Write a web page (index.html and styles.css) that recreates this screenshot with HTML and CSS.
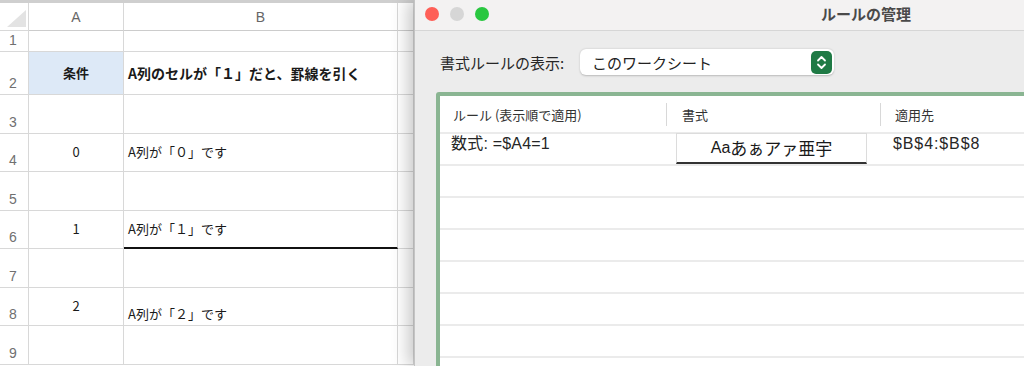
FILE: index.html
```html
<!DOCTYPE html>
<html lang="ja">
<head>
<meta charset="utf-8">
<title>ルールの管理</title>
<link rel="stylesheet" href="styles.css">
</head>
<body>
<div class="sheet">
  <div class="grid">
    <div class="corner"><svg width="28" height="27" viewBox="0 0 28 27"><polygon points="7,24 26,24 26,7" fill="#e3e3e3"/></svg></div>
    <div class="colhead">A</div>
    <div class="colhead">B</div>
    <div class="colhead"></div>

    <div class="rowhead">1</div><div class="cell"></div><div class="cell"></div><div class="cell"></div>
    <div class="rowhead">2</div><div class="cell center bold blue">条件</div><div class="cell bold big">A列のセルが「１」だと、罫線を引く</div><div class="cell"></div>
    <div class="rowhead">3</div><div class="cell"></div><div class="cell"></div><div class="cell"></div>
    <div class="rowhead">4</div><div class="cell center">0</div><div class="cell">A列が「０」です</div><div class="cell"></div>
    <div class="rowhead">5</div><div class="cell"></div><div class="cell"></div><div class="cell"></div>
    <div class="rowhead">6</div><div class="cell center">1</div><div class="cell ruled">A列が「１」です</div><div class="cell"></div>
    <div class="rowhead">7</div><div class="cell"></div><div class="cell"></div><div class="cell"></div>
    <div class="rowhead">8</div><div class="cell center">2</div><div class="cell bottom">A列が「２」です</div><div class="cell"></div>
    <div class="rowhead">9</div><div class="cell"></div><div class="cell"></div><div class="cell"></div>
  </div>
</div>

<div class="dialog">
  <div class="titlebar">
    <span class="light red"></span>
    <span class="light grey"></span>
    <span class="light green"></span>
    <span class="title">ルールの管理</span>
  </div>
  <div class="dbody">
    <div class="filter">
      <span class="label">書式ルールの表示:</span>
      <div class="select">
        <span class="seltext">このワークシート</span>
        <span class="stepper"><svg width="21" height="23" viewBox="0 0 21 23"><path d="M7 9.5 L10.5 6 L14 9.5 M7 13.5 L10.5 17 L14 13.5" fill="none" stroke="#fff" stroke-width="1.8" stroke-linecap="round" stroke-linejoin="round"/></svg></span>
      </div>
    </div>
    <div class="table">
      <div class="thead">
        <div class="th c1">ルール (表示順で適用)</div>
        <div class="sep"></div>
        <div class="th c2">書式</div>
        <div class="sep"></div>
        <div class="th c3">適用先</div>
      </div>
      <div class="tr">
        <div class="td c1">数式: =$A4=1</div>
        <div class="td c2"><div class="preview"><span class="lat">Aa</span>あぁアァ亜宇</div></div>
        <div class="td c3">$B$4:$B$8</div>
      </div>
      <div class="tr"></div>
      <div class="tr"></div>
      <div class="tr"></div>
      <div class="tr"></div>
      <div class="tr"></div>
      <div class="tr"></div>
      <div class="tr"></div>
    </div>
  </div>
</div>
</body>
</html>
```

FILE: styles.css
```css
body {
  margin: 0;
  width: 1024px;
  height: 366px;
  overflow: hidden;
  display: flex;
  background: #fff;
  font-family: "Noto Sans CJK JP", sans-serif;
  color: #1a1a1a;
}

/* ---------- spreadsheet ---------- */
.sheet {
  width: 414px;
  flex: none;
  border-top: 3px solid #cfcfcf;
  box-sizing: border-box;
  background: #fff;
}
.grid {
  display: grid;
  grid-template-columns: 29px 95px 274px 16px;
  grid-template-rows: 28px 21px 43px repeat(7, 38.5px);
}
.grid > div {
  box-sizing: border-box;
  border-right: 1px solid #d8d8d8;
  border-bottom: 1px solid #d8d8d8;
  display: flex;
  align-items: center;
  font-size: 13px;
  line-height: 16px;
  white-space: nowrap;
  overflow: hidden;
}
.corner {
  align-items: flex-start !important;
}
.corner svg { display: block; }
.colhead {
  justify-content: center;
  font-family: "Liberation Sans", sans-serif;
  font-size: 14px !important;
  color: #666;
  border-bottom-color: #cccccc !important;
}
.rowhead {
  align-items: flex-end !important;
  padding: 0 0 3px 9px;
  font-family: "Liberation Sans", sans-serif;
  font-size: 14px !important;
  color: #707070;
}
.cell { padding-left: 4px; }
.center { justify-content: center; padding-left: 0; }
.bold { font-weight: 700; }
.big { font-size: 14px !important; }
.blue { background: #dde9f7; }
.ruled { border-bottom: 2px solid #111 !important; }
.bottom { align-items: flex-end !important; padding-bottom: 3px; }

/* ---------- dialog ---------- */
.dialog {
  flex: 1;
  position: relative;
  z-index: 1;
  background: #ececec;
  border-left: 1px solid #c4c4c4;
  box-shadow: -6px 0 16px rgba(0, 0, 0, 0.22);
  overflow: hidden;
}
.titlebar {
  height: 31px;
  box-sizing: border-box;
  border-bottom: 1px solid #d6d6d6;
  background: #f3f2f2;
  display: flex;
  align-items: center;
  padding: 0 0 3px 10px;
}
.light {
  width: 14px;
  height: 14px;
  border-radius: 50%;
  margin-right: 11px;
  flex: none;
}
.light.red { background: #fe5f57; }
.light.grey { background: #d6d6d6; }
.light.green { background: #29c740; margin-right: 0; }
.title {
  margin-left: 332px;
  font-size: 15px;
  font-weight: 700;
  color: #4a4a4a;
  white-space: nowrap;
}
.dbody {
  padding: 18px 0 0 21px;
}
.filter {
  margin-left: 4px;
  display: flex;
  align-items: center;
  height: 26px;
}
.label {
  width: 140px;
  flex: none;
  font-size: 15px;
  color: #262626;
}
.select {
  width: 254px;
  height: 26px;
  box-sizing: border-box;
  background: #fff;
  border-radius: 6px;
  box-shadow: 0 0.5px 2px rgba(0, 0, 0, 0.22);
  display: flex;
  align-items: center;
  padding-left: 12px;
}
.seltext {
  font-size: 15px;
  color: #222;
}
.stepper {
  margin-left: auto;
  margin-right: 2px;
  width: 21px;
  height: 23px;
  border-radius: 5px;
  background: #1f7a45;
  display: flex;
}
.stepper svg { display: block; }

.table {
  margin-top: 17px;
  width: 660px;
  height: 300px;
  background: #fff;
  border: 4px solid #8ab592;
  border-radius: 3px;
}
.thead {
  height: 36px;
  display: flex;
  align-items: center;
}
.th {
  font-size: 13px;
  color: #333;
  white-space: nowrap;
}
.sep {
  width: 1px;
  height: 23px;
  background: #d8d8d8;
  flex: none;
}
.thead .c1 { width: 213px; padding-left: 13px; }
.thead .c2 { width: 198px; padding-left: 15px; }
.thead .c3 { padding-left: 14px; }

.tr {
  height: 32px;
  box-sizing: border-box;
  border-top: 2px solid #ebebeb;
  display: flex;
  align-items: flex-start;
}
.td {
  font-size: 16px;
  line-height: 20px;
  color: #262626;
  white-space: nowrap;
}
.tr .c1 { width: 215px; padding-left: 11px; font-family: "Liberation Sans", "Noto Sans CJK JP", sans-serif; letter-spacing: 0.2px; }
.tr .c2 { width: 214px; }
.tr .c3 { padding-left: 13px; font-family: "Liberation Sans", sans-serif; letter-spacing: 0.9px; }
.preview {
  margin: -1px 0 0 10px;
  width: 191px;
  height: 31px;
  box-sizing: border-box;
  border: 1px solid #dcdcdc;
  border-bottom: 2px solid #333;
  display: flex;
  align-items: center;
  justify-content: center;
  font-size: 17px;
  color: #1a1a1a;
  background: #fff;
}
.lat { font-family: "Liberation Sans", sans-serif; font-size: 16px; }
```
